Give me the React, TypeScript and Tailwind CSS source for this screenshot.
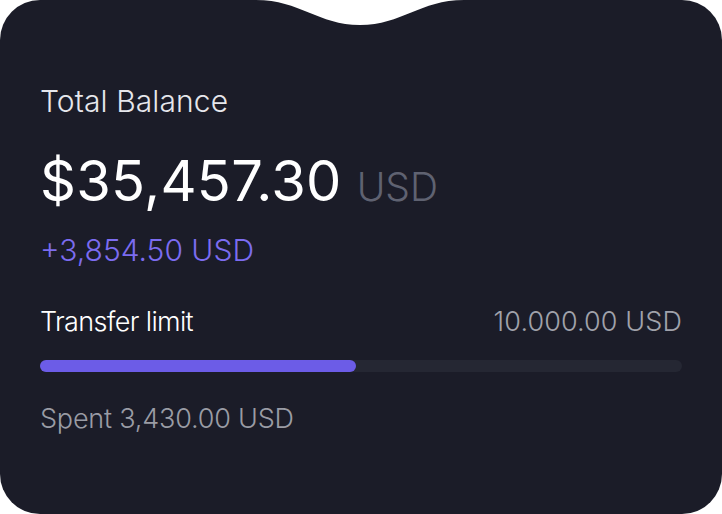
import React from "react";

export default function App() {
  return (
    <div className="w-[722px] h-[514px] bg-white" style={{ fontFamily: "Inter, 'Liberation Sans', sans-serif" }}>
      <div className="relative w-[722px] h-[514px] rounded-[40px] bg-[#1b1c28] px-[40px] pt-[83px] flex flex-col font-light">
        <svg className="absolute left-0 top-0" width="722" height="30" viewBox="0 0 722 30">
          <path d="M256 0 C300 0 318 25 360 25 C402 25 420 0 464 0 Z" fill="#ffffff" />
        </svg>
        <div className="text-[30px] leading-[36px] text-[#e6e7ec] tracking-[0.1px]">Total Balance</div>
        <div className="mt-[30px] flex items-baseline gap-[15px]">
          <span className="text-[56px] leading-[64px] text-white font-normal tracking-[0.3px]">$35,457.30</span>
          <span className="text-[39px] leading-[40px] text-[#5f6271]">USD</span>
        </div>
        <div className="mt-[19px] text-[30px] leading-[36px] text-[#7c6cf0]">+3,854.50 USD</div>
        <div className="mt-[38px] flex justify-between items-center">
          <span className="text-[27px] leading-[32px] text-white tracking-[-0.65px]">Transfer limit</span>
          <span className="text-[27px] leading-[32px] text-[#a0a2ab] tracking-[0.1px]">10.000.00 USD</span>
        </div>
        <div className="mt-[22px] h-[12px] w-full rounded-full bg-[#252733]">
          <div className="h-full w-[316px] rounded-full bg-[#6c5ce7]" />
        </div>
        <div className="mt-[31px] text-[27px] leading-[32px] text-[#9a9ca5] tracking-[-0.2px]">Spent 3,430.00 USD</div>
      </div>
    </div>
  );
}
